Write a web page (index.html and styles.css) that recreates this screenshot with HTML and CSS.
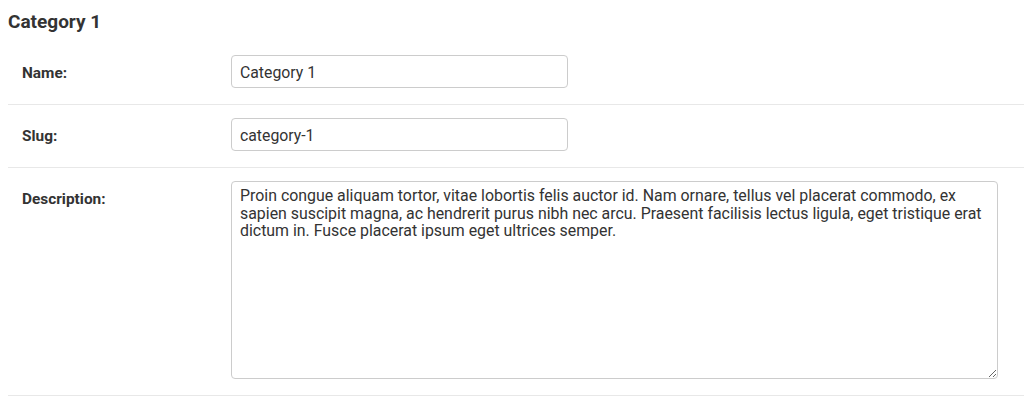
FILE: index.html
```html
<!DOCTYPE html>
<html lang="en">
<head>
<meta charset="utf-8">
<title>Category 1</title>
<link rel="stylesheet" href="styles.css">
</head>
<body>
<fieldset class="module">
  <h2 class="module-title">Category 1</h2>
  <div class="form-row">
    <label class="field-label" for="id_name">Name:</label>
    <input class="text-input" id="id_name" type="text" value="Category 1">
  </div>
  <div class="form-row">
    <label class="field-label" for="id_slug">Slug:</label>
    <input class="text-input" id="id_slug" type="text" value="category-1">
  </div>
  <div class="form-row">
    <label class="field-label" for="id_description">Description:</label>
    <textarea class="text-area" id="id_description">Proin congue aliquam tortor, vitae lobortis felis auctor id. Nam ornare, tellus vel placerat commodo, ex sapien suscipit magna, ac hendrerit purus nibh nec arcu. Praesent facilisis lectus ligula, eget tristique erat dictum in. Fusce placerat ipsum eget ultrices semper.</textarea>
  </div>
</fieldset>
</body>
</html>
```
FILE: styles.css
```css
html, body {
  margin: 0;
  padding: 0;
  background: #fff;
}
body {
  font-family: Roboto, "Liberation Sans", sans-serif;
  color: #333;
}
.module {
  margin: 0;
  padding: 0 0 0 8px;
  border: 0;
  min-width: 0;
}
.module-title {
  margin: 0;
  padding: 11px 0 9px;
  font-size: 19px;
  line-height: 22px;
  font-weight: 700;
  color: #333;
}
.form-row {
  display: flex;
  align-items: flex-start;
  padding: 13px 0 16px 14px;
  border-bottom: 1px solid #e8e8e8;
}
.field-label {
  width: 209px;
  flex: none;
  font-size: 15.4px;
  font-weight: 700;
  line-height: 18px;
  padding-top: 9px;
  color: #333;
}
.text-input {
  box-sizing: border-box;
  width: 337px;
  height: 33px;
  margin: 0;
  padding: 6px 8px 5px;
  border: 1px solid #ccc;
  border-radius: 4px;
  font-family: Roboto, "Liberation Sans", sans-serif;
  font-size: 15.8px;
  line-height: 20px;
  color: #333;
  background: #fff;
}
.text-area {
  box-sizing: border-box;
  width: 767px;
  height: 198px;
  margin: 0;
  padding: 5px 8px;
  border: 1px solid #ccc;
  border-radius: 4px;
  font-family: Roboto, "Liberation Sans", sans-serif;
  font-size: 15.9px;
  line-height: 17.5px;
  color: #333;
  background: #fff;
  resize: both;
}
```
